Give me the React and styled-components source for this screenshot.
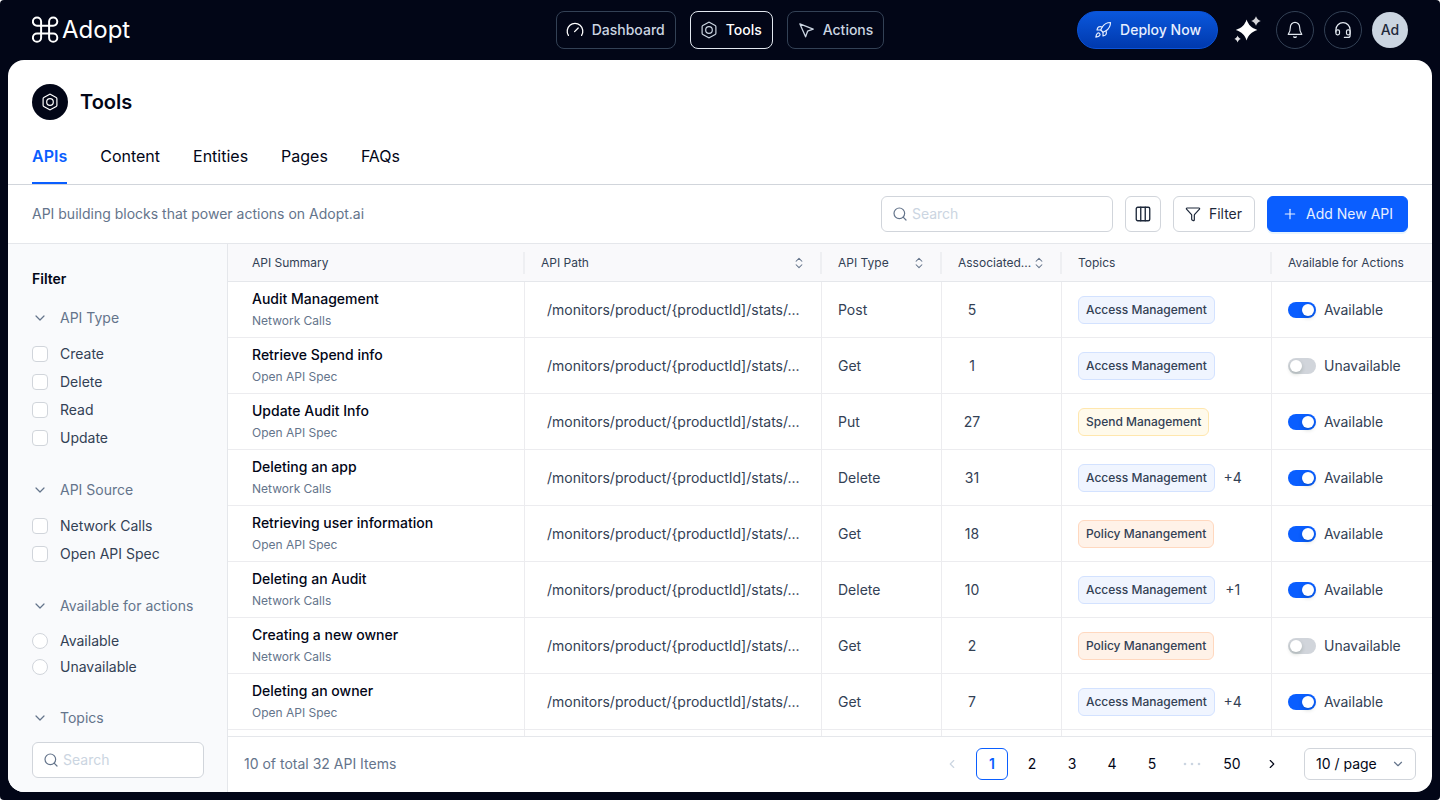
import React, { useState } from "react";
import styled, { createGlobalStyle, css } from "styled-components";
import {
  ChevronDown,
  ChevronLeft,
  ChevronRight,
  ChevronsUpDown,
  Columns3,
  Funnel,
  Plus,
  Rocket,
  Search,
} from "lucide-react";

const GlobalStyle = createGlobalStyle`
  *, *::before, *::after {
    box-sizing: border-box;
  }

  body {
    margin: 0;
    background: #ffffff;
    font-family: Inter, "Liberation Sans", sans-serif;
    font-size: 14px;
    line-height: 20px;
    color: #020617;
  }

  button, input, select {
    font: inherit;
    color: inherit;
    margin: 0;
  }

  h1, h2, p {
    margin: 0;
  }
`;

/* ---------- shell ---------- */

const Shell = styled.div`
  height: 100vh;
  display: flex;
  flex-direction: column;
  padding: 0 8px 8px;
  background: #020617;
  border-radius: 4px;
  overflow: hidden;
`;

const TopBar = styled.header`
  display: grid;
  grid-template-columns: 1fr auto 1fr;
  align-items: center;
  flex: none;
  height: 60px;
  padding: 0 24px;
`;

const Logo = styled.a`
  display: inline-flex;
  align-items: center;
  justify-self: start;
  gap: 3px;
  color: #ffffff;
  font-size: 24px;
  font-weight: 400;
  line-height: 28px;
  text-decoration: none;
`;

const MainNav = styled.nav`
  display: flex;
  gap: 14px;
`;

const NavItem = styled.a`
  display: flex;
  align-items: center;
  gap: 8px;
  height: 38px;
  padding: 0 10px 0 9px;
  border: 1px solid ${(p) => (p.$active ? "#e2e8f0" : "#334155")};
  border-radius: 8px;
  color: ${(p) => (p.$active ? "#ffffff" : "#cbd5e1")};
  font-weight: 500;
  text-decoration: none;

  & > svg {
    color: ${(p) => (p.$bright ? "#ffffff" : "#cbd5e1")};
  }
`;

const TopActions = styled.div`
  display: flex;
  align-items: center;
  justify-self: end;
  gap: 10px;
`;

const DeployButton = styled.button`
  display: flex;
  align-items: center;
  gap: 8px;
  height: 38px;
  padding: 0 16px;
  border: 1px solid #0b53d8;
  border-radius: 19px;
  background: linear-gradient(180deg, #0a57dc 0%, #0039ad 100%);
  color: #e7efff;
  font-weight: 500;
`;

const RoundButton = styled.button`
  display: flex;
  align-items: center;
  justify-content: center;
  width: 38px;
  height: 38px;
  padding: 0;
  border: 1px solid ${(p) => (p.$plain ? "transparent" : "#334155")};
  border-radius: 50%;
  background: transparent;
  color: #e2e8f0;
`;

const Avatar = styled.button`
  width: 36px;
  height: 36px;
  padding: 0;
  border: none;
  border-radius: 50%;
  background: #cbd5e1;
  color: #1e293b;
  font-weight: 500;
`;

const Panel = styled.main`
  flex: 1;
  min-height: 0;
  display: flex;
  flex-direction: column;
  background: #ffffff;
  border-radius: 16px;
  overflow: hidden;
`;

/* ---------- page head ---------- */

const PageHead = styled.div`
  display: flex;
  align-items: center;
  gap: 12px;
  padding: 24px 24px 0;
`;

const PageIcon = styled.span`
  display: flex;
  align-items: center;
  justify-content: center;
  width: 36px;
  height: 36px;
  border-radius: 50%;
  background: #020617;
  color: #ffffff;
`;

const PageTitle = styled.h1`
  font-size: 20px;
  font-weight: 600;
  line-height: 28px;
`;

const Tabs = styled.div`
  display: flex;
  gap: 33px;
  padding: 8px 24px 0;
  border-bottom: 1px solid #d1d5db;
`;

const Tab = styled.button`
  height: 56px;
  padding: 2px 0 0;
  border: none;
  border-bottom: 2px solid ${(p) => (p.$active ? "#0a5eff" : "transparent")};
  background: none;
  color: ${(p) => (p.$active ? "#0a5eff" : "#020617")};
  font-size: 16px;
  font-weight: ${(p) => (p.$active ? 600 : 400)};
`;

const Toolbar = styled.div`
  display: flex;
  align-items: center;
  gap: 12px;
  height: 59px;
  padding: 0 24px;
  border-bottom: 1px solid #e5e7eb;
`;

const ToolbarText = styled.p`
  flex: 1;
  color: #64748b;
`;

const SearchField = styled.label`
  display: flex;
  align-items: center;
  gap: 4px;
  width: ${(p) => (p.$wide ? "232px" : "100%")};
  height: 36px;
  padding: 0 10px;
  border: 1px solid #d1d5db;
  border-radius: 6px;
  background: #ffffff;
  color: #64748b;

  & > svg {
    flex: none;
  }

  & > input {
    flex: 1;
    min-width: 0;
    padding: 0;
    border: none;
    outline: none;
    background: none;
    color: #020617;
  }

  & > input::placeholder {
    color: #cbd5e1;
  }
`;

const ToolButton = styled.button`
  display: flex;
  align-items: center;
  justify-content: center;
  gap: 8px;
  min-width: 36px;
  height: 36px;
  padding: ${(p) => (p.$icon ? "0" : "0 12px 0 11px")};
  border: 1px solid #d1d5db;
  border-radius: 6px;
  background: #ffffff;
  color: #1e293b;

  ${(p) =>
    p.$primary &&
    css`
      padding: 0 14px;
      border-color: #0a5eff;
      background: #0a5eff;
      color: #e7efff;
      box-shadow: 0 2px 0 rgba(5, 145, 255, 0.1);
    `}
`;

/* ---------- filter sidebar ---------- */

const Body = styled.div`
  flex: 1;
  min-height: 0;
  display: flex;
`;

const Sidebar = styled.aside`
  flex: none;
  width: 220px;
  padding: 24px 23px 12px 24px;
  border-right: 1px solid #e5e7eb;
  background: #f9fafc;
  overflow: hidden;
`;

const SidebarTitle = styled.h2`
  margin-bottom: 18px;
  font-size: 14px;
  font-weight: 600;
  line-height: 22px;
`;

const Group = styled.section`
  margin-bottom: 28px;
`;

const GroupToggle = styled.button`
  display: flex;
  align-items: center;
  gap: 12px;
  width: 100%;
  margin-bottom: ${(p) => (p.$field ? "14px" : "12px")};
  padding: 0;
  border: none;
  background: none;
  color: #64748b;
  text-align: left;
`;

const Option = styled.label`
  display: flex;
  align-items: center;
  gap: 12px;
  height: ${(p) => (p.$dense ? "26px" : "28px")};
  color: #334155;

  & > input {
    appearance: none;
    width: 16px;
    height: 16px;
    border: 1px solid #d1d5db;
    border-radius: ${(p) => (p.$dense ? "50%" : "4px")};
    background: #ffffff;
  }

  & > input:checked {
    border-color: #0a5eff;
    background: #0a5eff;
  }
`;

/* ---------- table ---------- */

const Content = styled.div`
  flex: 1;
  min-width: 0;
  display: flex;
  flex-direction: column;
`;

const TableWrap = styled.div`
  flex: 1;
  min-height: 0;
  overflow: hidden;
`;

const Table = styled.table`
  width: 100%;
  table-layout: fixed;
  border-collapse: separate;
  border-spacing: 0;
`;

const Col = styled.col`
  width: ${(p) => p.$width || "auto"};
`;

const Th = styled.th`
  height: 38px;
  padding: 0 16px 0 ${(p) => (p.$first ? "24px" : "16px")};
  border-bottom: 1px solid #e5e7eb;
  background: linear-gradient(#eeeff2, #eeeff2) right center / 2px 22px
    no-repeat #f9f9fb;
  color: #334155;
  font-size: 12px;
  font-weight: 400;
  text-align: left;
  white-space: nowrap;

  &:last-child {
    background: #f9f9fb;
  }
`;

const HeadCell = styled.div`
  display: flex;
  align-items: center;
  justify-content: space-between;
`;

const SortButton = styled.button`
  display: flex;
  padding: 0;
  border: none;
  background: none;
  color: #64748b;
`;

const Td = styled.td`
  height: 56px;
  padding: 0 16px 0 ${(p) => (p.$first ? "24px" : "16px")};
  border-right: 1px solid #ececef;
  border-bottom: 1px solid #ececef;
  color: #334155;
  white-space: nowrap;

  &:last-child {
    border-right: none;
  }
`;

const RowTitle = styled.div`
  margin-bottom: 2px;
  color: #020617;
  font-weight: 500;
`;

const RowSource = styled.div`
  color: #64748b;
  font-size: 12px;
`;

const Path = styled.div`
  padding-left: 6px;
`;

const Count = styled.div`
  width: 28px;
  text-align: center;
`;

const TopicCell = styled.div`
  display: flex;
  align-items: center;
  gap: 4px;
`;

const tones = {
  access: css`
    border-color: #d3e2ff;
    background: #f0f5ff;
  `,
  spend: css`
    border-color: #ffe7ae;
    background: #fffaeb;
  `,
  policy: css`
    border-color: #ffd8bf;
    background: #fff2e8;
  `,
};

const Tag = styled.span`
  padding: 3px 7px;
  border: 1px solid;
  border-radius: 6px;
  color: #334155;
  font-size: 12px;
  font-weight: 500;
  ${(p) => tones[p.$tone]}
`;

const More = styled.span`
  width: 28px;
  text-align: center;
`;

const SwitchLabel = styled.label`
  display: flex;
  align-items: center;
  gap: 8px;
`;

const Switch = styled.input`
  appearance: none;
  flex: none;
  display: flex;
  width: 28px;
  height: 16px;
  padding: 2px;
  border-radius: 8px;
  background: #d1d5db;

  &::before {
    content: "";
    width: 12px;
    height: 12px;
    border-radius: 50%;
    background: #ffffff;
    box-shadow: 0 2px 4px rgba(0, 35, 11, 0.2);
  }

  &:checked {
    justify-content: flex-end;
    background: #0a5eff;
  }
`;

/* ---------- footer ---------- */

const Footer = styled.footer`
  display: flex;
  align-items: center;
  flex: none;
  gap: 16px;
  height: 56px;
  padding: 0 16px 1px;
  border-top: 1px solid #e5e7eb;
`;

const Total = styled.p`
  flex: 1;
  color: #64748b;
`;

const Pager = styled.nav`
  display: flex;
  gap: 8px;
`;

const PageButton = styled.button`
  display: flex;
  align-items: center;
  justify-content: center;
  width: 32px;
  height: 32px;
  padding: 0;
  border: 1px solid ${(p) => (p.$current ? "#0a5eff" : "transparent")};
  border-radius: 6px;
  background: none;
  color: ${(p) => (p.$current ? "#0a5eff" : "#020617")};
  font-weight: ${(p) => (p.$current ? 600 : 400)};

  &:disabled {
    color: #cbd5e1;
  }
`;

const Dots = styled.span`
  display: flex;
  align-items: center;
  justify-content: center;
  width: 32px;
  height: 32px;
  color: #cbd5e1;
`;

const PageSize = styled.div`
  display: grid;
  align-items: center;
  width: 112px;
  height: 32px;
  border: 1px solid #d1d5db;
  border-radius: 6px;
  color: #64748b;

  & > * {
    grid-area: 1 / 1;
  }

  & > select {
    appearance: none;
    height: 30px;
    padding: 0 30px 0 11px;
    border: none;
    background: none;
    color: #020617;
  }

  & > svg {
    justify-self: end;
    margin-right: 10px;
    pointer-events: none;
  }
`;

/* ---------- icons ---------- */

const LogoMark = () => (
  <svg width="27" height="28" viewBox="0 0 27 28" fill="none" stroke="currentColor" strokeWidth="2">
    <path d="M9.1 17.6V5.6A4.1 4.1 0 1 0 5 9.7H21.2A4.1 4.1 0 1 0 17.1 5.6V21.7A4.1 4.1 0 1 0 21.2 17.6H5A4.1 4.1 0 1 0 9.1 21.7V9" />
  </svg>
);

const GaugeIcon = () => (
  <svg width="18" height="18" viewBox="0 0 18 18" fill="none" stroke="currentColor" strokeWidth="1.3" strokeLinecap="round">
    <path d="M2.4 14.4A7.8 7.8 0 1 1 15.6 14.4" />
    <path d="M8.6 10.6L12.2 7" />
  </svg>
);

const NutIcon = () => (
  <svg width="18" height="18" viewBox="0 0 18 18" fill="none" stroke="currentColor" strokeWidth="1.2" strokeLinejoin="round">
    <path d="M8.3 1.4a1.4 1.4 0 0 1 1.4 0l5.5 3.1a1.4 1.4 0 0 1 .7 1.2v6.6a1.4 1.4 0 0 1-.7 1.2l-5.5 3.1a1.4 1.4 0 0 1-1.4 0l-5.5-3.1a1.4 1.4 0 0 1-.7-1.2V5.7a1.4 1.4 0 0 1 .7-1.2z" />
    <circle cx="9" cy="9" r="3.3" />
  </svg>
);

const CursorIcon = () => (
  <svg width="18" height="18" viewBox="0 0 18 18" fill="none" stroke="currentColor" strokeWidth="1.3" strokeLinejoin="round">
    <path d="M2.9 2.9L16.2 8.2L10.6 10.2L8.6 15.8Z" />
  </svg>
);

const SparkleIcon = () => (
  <svg width="28" height="28" viewBox="0 0 28 28">
    <path fill="#ffffff" d="M13.6 3.6C15.4 9 18.4 12 24.4 14C18.4 16 15.4 19 13.6 24.4C11.8 19 8.8 16 2.8 14C8.8 12 11.8 9 13.6 3.6Z" />
    <path fill="#d4d4d8" d="M23 .2C24.1 2.9 25.1 4 27.8 5C25.1 6 24.1 7.1 23 9.8C21.9 7.1 20.9 6 18.2 5C20.9 4 21.9 2.9 23 .2Z" />
    <path fill="#e4e4e7" d="M4.6 19.6C5.3 21.4 6 22.2 7.8 23C6 23.8 5.3 24.6 4.6 26.4C3.9 24.6 3.2 23.8 1.4 23C3.2 22.2 3.9 21.4 4.6 19.6Z" />
  </svg>
);

const BellIcon = () => (
  <svg width="18" height="18" viewBox="0 0 18 18" fill="none" stroke="currentColor" strokeWidth="1.2" strokeLinecap="round" strokeLinejoin="round">
    <path d="M9 1.4A4.6 4.6 0 0 0 4.4 6C4.4 9.6 3.6 11.6 2.2 13.3H15.8C14.4 11.6 13.6 9.6 13.6 6A4.6 4.6 0 0 0 9 1.4Z" />
    <path d="M7.6 15.8A2 2 0 0 0 10.4 15.8" />
  </svg>
);

const HeadsetIcon = () => (
  <svg width="18" height="18" viewBox="0 0 18 18" fill="none" stroke="currentColor" strokeWidth="1.2" strokeLinecap="round" strokeLinejoin="round">
    <path d="M1.9 11V8.8A7.1 7.1 0 0 1 16.1 8.8V14.4A2 2 0 0 1 14.1 16.4H10.4" />
    <rect x="1.9" y="8.8" width="3.6" height="5" rx="1.5" />
    <rect x="12.5" y="8.8" width="3.6" height="5" rx="1.5" />
  </svg>
);

const DotsIcon = () => (
  <svg width="18" height="4" viewBox="0 0 18 4" fill="currentColor">
    <circle cx="2" cy="2" r="1.3" />
    <circle cx="9" cy="2" r="1.3" />
    <circle cx="16" cy="2" r="1.3" />
  </svg>
);

/* ---------- data ---------- */

const PATH = "/monitors/product/{productId]/stats/...";

const columns = [
  { label: "API Summary" },
  { label: "API Path", sort: true },
  { label: "API Type", sort: true, width: "120px" },
  { label: "Associated...", sort: true, width: "120px" },
  { label: "Topics", width: "210px" },
  { label: "Available for Actions", width: "160px" },
];

const topics = {
  access: "Access Management",
  spend: "Spend Management",
  policy: "Policy Manangement",
};

const apis = [
  { name: "Audit Management", source: "Network Calls", type: "Post", count: 5, topic: "access", on: true },
  { name: "Retrieve Spend info", source: "Open API Spec", type: "Get", count: 1, topic: "access", on: false },
  { name: "Update Audit Info", source: "Open API Spec", type: "Put", count: 27, topic: "spend", on: true },
  { name: "Deleting an app", source: "Network Calls", type: "Delete", count: 31, topic: "access", more: 4, on: true },
  { name: "Retrieving user information", source: "Open API Spec", type: "Get", count: 18, topic: "policy", on: true },
  { name: "Deleting an Audit", source: "Network Calls", type: "Delete", count: 10, topic: "access", more: 1, on: true },
  { name: "Creating a new owner", source: "Network Calls", type: "Get", count: 2, topic: "policy", on: false },
  { name: "Deleting an owner", source: "Open API Spec", type: "Get", count: 7, topic: "access", more: 4, on: true },
];

const filterGroups = [
  { title: "API Type", options: ["Create", "Delete", "Read", "Update"] },
  { title: "API Source", options: ["Network Calls", "Open API Spec"] },
  { title: "Available for actions", options: ["Available", "Unavailable"], radio: true },
];

/* ---------- components ---------- */

const FilterGroup = ({ title, options, radio }) => (
  <Group>
    <GroupToggle type="button" aria-expanded="true">
      <ChevronDown size={16} strokeWidth={1.8} />
      {title}
    </GroupToggle>
    {options.map((option) => (
      <Option key={option} $dense={radio}>
        <input type={radio ? "radio" : "checkbox"} name={title} />
        {option}
      </Option>
    ))}
  </Group>
);

const ApiRow = ({ api }) => {
  const [on, setOn] = useState(api.on);

  return (
    <tr>
      <Td $first>
        <RowTitle>{api.name}</RowTitle>
        <RowSource>{api.source}</RowSource>
      </Td>
      <Td>
        <Path>{PATH}</Path>
      </Td>
      <Td>{api.type}</Td>
      <Td>
        <Count>{api.count}</Count>
      </Td>
      <Td>
        <TopicCell>
          <Tag $tone={api.topic}>{topics[api.topic]}</Tag>
          {api.more && <More>+{api.more}</More>}
        </TopicCell>
      </Td>
      <Td>
        <SwitchLabel>
          <Switch type="checkbox" role="switch" checked={on} onChange={() => setOn(!on)} />
          {on ? "Available" : "Unavailable"}
        </SwitchLabel>
      </Td>
    </tr>
  );
};

export default function App() {
  const [page, setPage] = useState(1);

  return (
    <>
      <GlobalStyle />
      <Shell>
        <TopBar>
          <Logo href="#">
            <LogoMark />
            Adopt
          </Logo>
          <MainNav>
            <NavItem href="#dashboard" $bright>
              <GaugeIcon />
              Dashboard
            </NavItem>
            <NavItem href="#tools" $active>
              <NutIcon />
              Tools
            </NavItem>
            <NavItem href="#actions">
              <CursorIcon />
              Actions
            </NavItem>
          </MainNav>
          <TopActions>
            <DeployButton type="button">
              <Rocket size={18} strokeWidth={1.6} />
              Deploy Now
            </DeployButton>
            <RoundButton type="button" aria-label="Assistant" $plain>
              <SparkleIcon />
            </RoundButton>
            <RoundButton type="button" aria-label="Notifications">
              <BellIcon />
            </RoundButton>
            <RoundButton type="button" aria-label="Support">
              <HeadsetIcon />
            </RoundButton>
            <Avatar type="button">Ad</Avatar>
          </TopActions>
        </TopBar>

        <Panel>
          <PageHead>
            <PageIcon>
              <NutIcon />
            </PageIcon>
            <PageTitle>Tools</PageTitle>
          </PageHead>
          <Tabs role="tablist">
            {["APIs", "Content", "Entities", "Pages", "FAQs"].map((tab, i) => (
              <Tab key={tab} type="button" role="tab" aria-selected={i === 0} $active={i === 0}>
                {tab}
              </Tab>
            ))}
          </Tabs>
          <Toolbar>
            <ToolbarText>API building blocks that power actions on Adopt.ai</ToolbarText>
            <SearchField $wide>
              <Search size={16} strokeWidth={1.8} />
              <input type="text" placeholder="Search" aria-label="Search APIs" />
            </SearchField>
            <ToolButton type="button" aria-label="Columns" $icon>
              <Columns3 size={18} strokeWidth={1.8} />
            </ToolButton>
            <ToolButton type="button">
              <Funnel size={16} strokeWidth={1.8} />
              Filter
            </ToolButton>
            <ToolButton type="button" $primary>
              <Plus size={16} strokeWidth={1.8} />
              Add New API
            </ToolButton>
          </Toolbar>

          <Body>
            <Sidebar>
              <SidebarTitle>Filter</SidebarTitle>
              {filterGroups.map((group) => (
                <FilterGroup key={group.title} {...group} />
              ))}
              <GroupToggle type="button" aria-expanded="true" $field>
                <ChevronDown size={16} strokeWidth={1.8} />
                Topics
              </GroupToggle>
              <SearchField>
                <Search size={16} strokeWidth={1.8} />
                <input type="text" placeholder="Search" aria-label="Search topics" />
              </SearchField>
            </Sidebar>

            <Content>
              <TableWrap>
                <Table>
                  <colgroup>
                    {columns.map((c) => (
                      <Col key={c.label} $width={c.width} />
                    ))}
                  </colgroup>
                  <thead>
                    <tr>
                      {columns.map((c, i) => (
                        <Th key={c.label} scope="col" $first={i === 0}>
                          <HeadCell>
                            {c.label}
                            {c.sort && (
                              <SortButton type="button" aria-label={`Sort by ${c.label}`}>
                                <ChevronsUpDown size={14} strokeWidth={1.8} />
                              </SortButton>
                            )}
                          </HeadCell>
                        </Th>
                      ))}
                    </tr>
                  </thead>
                  <tbody>
                    {apis.map((api) => (
                      <ApiRow key={api.name} api={api} />
                    ))}
                    <tr>
                      {columns.map((c) => (
                        <Td key={c.label} />
                      ))}
                    </tr>
                  </tbody>
                </Table>
              </TableWrap>
              <Footer>
                <Total>10 of total 32 API Items</Total>
                <Pager aria-label="Pagination">
                  <PageButton type="button" aria-label="Previous" disabled={page === 1}>
                    <ChevronLeft size={14} />
                  </PageButton>
                  {[1, 2, 3, 4, 5].map((n) => (
                    <PageButton key={n} type="button" $current={n === page} onClick={() => setPage(n)}>
                      {n}
                    </PageButton>
                  ))}
                  <Dots>
                    <DotsIcon />
                  </Dots>
                  <PageButton type="button" $current={page === 50} onClick={() => setPage(50)}>
                    50
                  </PageButton>
                  <PageButton type="button" aria-label="Next">
                    <ChevronRight size={14} />
                  </PageButton>
                </Pager>
                <PageSize>
                  <select aria-label="Items per page" defaultValue="10">
                    <option value="10">10 / page</option>
                    <option value="20">20 / page</option>
                    <option value="50">50 / page</option>
                  </select>
                  <ChevronDown size={14} />
                </PageSize>
              </Footer>
            </Content>
          </Body>
        </Panel>
      </Shell>
    </>
  );
}
